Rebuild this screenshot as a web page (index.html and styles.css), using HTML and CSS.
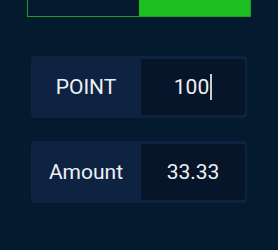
FILE: index.html
```html
<!DOCTYPE html>
<html lang="en">

<head>
    <meta charset="UTF-8">
    <meta name="viewport" content="width=device-width, initial-scale=1.0">
    <title>Point</title>
    <link rel="stylesheet" href="styles.css">
</head>

<body>
    <div class="page">
        <div class="switch">
            <div class="switch-side"></div>
            <div class="switch-side active"></div>
        </div>

        <div class="fields">
            <div class="field">
                <div class="field-label">POINT</div>
                <div class="field-value">100<span class="caret"></span></div>
            </div>
            <div class="field">
                <div class="field-label">Amount</div>
                <div class="field-value">33.33</div>
            </div>
        </div>
    </div>
</body>

</html>
```

FILE: styles.css
```css
*{
    margin: 0;
    padding: 0;
    box-sizing: border-box;
}
body{
    background-color: #041a2f;
    width: 278px;
    height: 250px;
    overflow: hidden;
    font-family: Roboto, "Noto Sans", sans-serif;
    color: #eef1f4;
}
.page{
    padding: 0 27px;
}
.switch{
    display: flex;
    height: 40px;
    margin-top: -23px;
    border: 1px solid #1f9b2a;
}
.switch-side{
    flex: 1;
}
.switch-side.active{
    background-color: #1cbf1f;
}
.fields{
    display: flex;
    flex-direction: column;
    gap: 23px;
    margin-top: 39px;
    padding: 0 4px;
}
.field{
    display: flex;
    height: 62px;
    background-color: #0e2341;
    border-radius: 4px;
    padding: 3px 2px 3px 0;
}
.field-label{
    width: 110px;
    display: flex;
    align-items: center;
    justify-content: center;
    font-size: 21px;
}
.field-value{
    flex: 1;
    display: flex;
    align-items: center;
    justify-content: center;
    background-color: #06152a;
    border-radius: 0 3px 3px 0;
    font-size: 21px;
}
.caret{
    display: inline-block;
    width: 2px;
    height: 26px;
    margin-left: 1px;
    background-color: #c9ccd2;
}
```
